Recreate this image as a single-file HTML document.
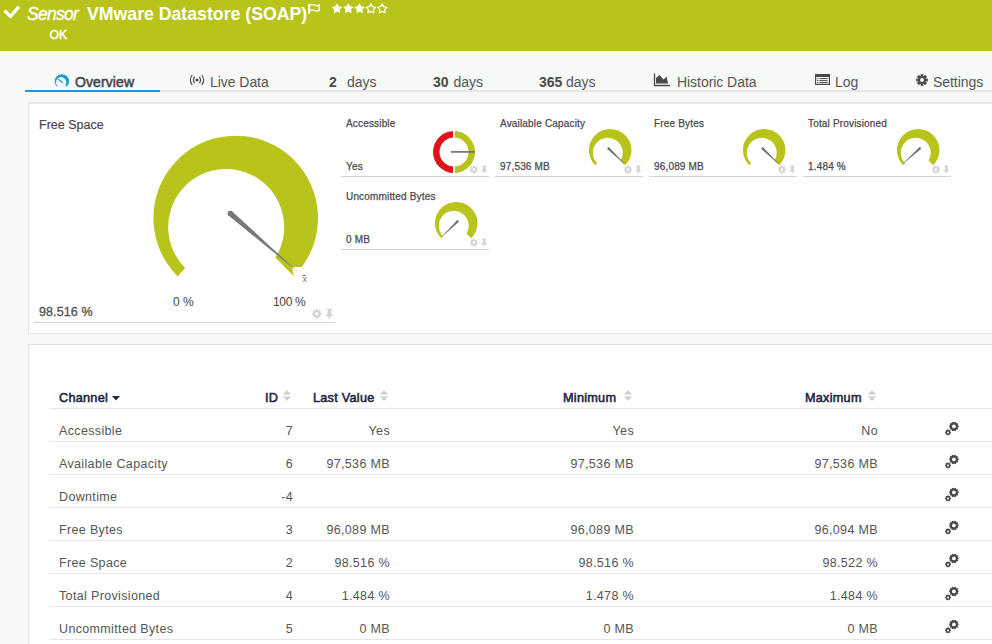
<!DOCTYPE html>
<html><head><meta charset="utf-8">
<style>
*{margin:0;padding:0;box-sizing:border-box}
html,body{width:992px;height:644px;overflow:hidden}
body{font-family:"Liberation Sans",sans-serif;background:#f7f8f8;position:relative;color:#555}
.a{position:absolute;white-space:nowrap;line-height:1}
#hdr{position:absolute;left:0;top:0;width:992px;height:51px;background:#b8c41c}
#tabline{position:absolute;left:25px;top:90px;width:967px;height:2px;background:#e6e6e6}
#tabsel{position:absolute;left:25px;top:90px;width:135px;height:2px;background:#1c9ad6}
.tab{position:absolute;top:75px;font-size:14px;letter-spacing:-0.05px;color:#555;line-height:1;white-space:nowrap}
.tab b{color:#4a4a4a}
.panel{position:absolute;left:28px;background:#fff;border:1px solid #e2e2e2;border-right:none}
#p1{border-top:2px solid #e6e7e7}
#p1{top:102px;width:970px;height:232px}
#p2{top:344px;width:970px;height:310px}
.wl{position:absolute;font-size:10px;color:#4a4a4a;line-height:1;white-space:nowrap;letter-spacing:0.17px;-webkit-text-stroke:0.25px #4a4a4a}
.sep{position:absolute;height:1px;background:#d2d2d2}
.th{position:absolute;top:392px;font-size:12.7px;color:#1d2540;line-height:1;white-space:nowrap;-webkit-text-stroke:0.55px #1d2540;letter-spacing:0.25px}
.rl{position:absolute;left:49px;width:943px;height:1px;background:#e6e6e6}
.td{position:absolute;font-size:12.5px;color:#555;line-height:1;white-space:nowrap;letter-spacing:0.35px}
.r{text-align:right}
svg{position:absolute;overflow:visible}
</style></head><body>
<div id="hdr"></div>
<svg style="left:0;top:0" width="30" height="30"><path d="M4.6 10.6 L10.5 16.5 L18.9 6.6" fill="none" stroke="#fff" stroke-width="3.2"/></svg>
<div class="a" style="left:27px;top:6px;font-size:17.5px;color:#fff;font-style:italic;letter-spacing:-0.7px;-webkit-text-stroke:0.35px #fff">Sensor</div>
<div class="a" style="left:87px;top:6px;font-size:17.7px;color:#fff;font-weight:bold">VMware Datastore (SOAP)</div>
<svg style="left:0;top:0" width="330" height="20"><path d="M309.2 4 V13.8" stroke="#fff" stroke-width="2"/><path d="M310 5 Q312.5 4 315 5.2 T319.2 5 V10.6 Q316.5 11.5 314.5 10.4 T310 10.6" fill="none" stroke="#fff" stroke-width="1.3"/></svg>
<svg style="left:0;top:0" width="400" height="20"><path d="M337.00 3.20 L338.70 6.35 L342.23 7.00 L339.76 9.60 L340.23 13.15 L337.00 11.60 L333.77 13.15 L334.24 9.60 L331.77 7.00 L335.30 6.35Z" fill="#fff"/><path d="M348.30 3.20 L350.00 6.35 L353.53 7.00 L351.06 9.60 L351.53 13.15 L348.30 11.60 L345.07 13.15 L345.54 9.60 L343.07 7.00 L346.60 6.35Z" fill="#fff"/><path d="M359.60 3.20 L361.30 6.35 L364.83 7.00 L362.36 9.60 L362.83 13.15 L359.60 11.60 L356.37 13.15 L356.84 9.60 L354.37 7.00 L357.90 6.35Z" fill="#fff"/><path d="M370.90 3.90 L372.43 6.70 L375.56 7.29 L373.37 9.60 L373.78 12.76 L370.90 11.40 L368.02 12.76 L368.43 9.60 L366.24 7.29 L369.37 6.70Z" fill="none" stroke="#fff" stroke-width="1.2" stroke-linejoin="round"/><path d="M382.20 3.90 L383.73 6.70 L386.86 7.29 L384.67 9.60 L385.08 12.76 L382.20 11.40 L379.32 12.76 L379.73 9.60 L377.54 7.29 L380.67 6.70Z" fill="none" stroke="#fff" stroke-width="1.2" stroke-linejoin="round"/></svg>
<div class="a" style="left:49.5px;top:29px;font-size:12.3px;color:#fff;-webkit-text-stroke:0.45px #fff">OK</div>

<div id="tabline"></div><div id="tabsel"></div>
<svg style="left:0;top:0" width="100" height="100"><g transform="translate(61.9,81.4) scale(0.072)"><use href="#gband" fill="#1c9ad6"/></g><path d="M58.3 79.3 L62.8 82.8" stroke="#1c9ad6" stroke-width="1.2"/></svg>
<div class="tab" style="left:75px;color:#484848;letter-spacing:0.1px;-webkit-text-stroke:0.55px #484848">Overview</div>
<svg style="left:0;top:0" width="250" height="100"><g fill="none" stroke="#4a4a4a" stroke-width="1.2"><path d="M192.2 75 Q188.6 80 192.2 85"/><path d="M194.6 76.8 Q192.3 80 194.6 83.2"/><path d="M201.8 75 Q205.4 80 201.8 85"/><path d="M199.4 76.8 Q201.7 80 199.4 83.2"/></g><circle cx="197" cy="80" r="1.6" fill="#4a4a4a"/></svg>
<div class="tab" style="left:210px">Live Data</div>
<div class="tab" style="left:329px"><b>2</b></div><div class="tab" style="left:347px">days</div>
<div class="tab" style="left:433px"><b>30</b></div><div class="tab" style="left:453.5px">days</div>
<div class="tab" style="left:539px"><b>365</b></div><div class="tab" style="left:566px">days</div>
<svg style="left:653px;top:73px" width="18" height="14"><path d="M1.5 0.5 V12.5 H17" fill="none" stroke="#4a4a4a" stroke-width="1.3"/><path d="M3 10.5 V5 L6.5 2 L10.5 6.5 L13.5 3.5 L15 10.5 Z" fill="#4a4a4a"/></svg>
<div class="tab" style="left:677px">Historic Data</div>
<svg style="left:0;top:0" width="900" height="100"><rect x="815.6" y="74.6" width="13.8" height="9.8" fill="none" stroke="#4a4a4a" stroke-width="1.2"/><rect x="815" y="74" width="15" height="3" fill="#4a4a4a"/><path d="M817.2 78.6 H818.4 M819.4 78.6 H827.6 M817.2 80.6 H818.4 M819.4 80.6 H827.6 M817.2 82.6 H818.4 M819.4 82.6 H827.6" stroke="#4a4a4a" stroke-width="1"/></svg>
<div class="tab" style="left:835px">Log</div>
<svg style="left:0;top:0" width="992" height="100"><path d="M920.73 76.10 L920.42 74.21 L923.58 74.21 L923.27 76.10 L923.86 76.35 L924.97 74.79 L927.21 77.03 L925.65 78.14 L925.90 78.73 L927.79 78.42 L927.79 81.58 L925.90 81.27 L925.65 81.86 L927.21 82.97 L924.97 85.21 L923.86 83.65 L923.27 83.90 L923.58 85.79 L920.42 85.79 L920.73 83.90 L920.14 83.65 L919.03 85.21 L916.79 82.97 L918.35 81.86 L918.10 81.27 L916.21 81.58 L916.21 78.42 L918.10 78.73 L918.35 78.14 L916.79 77.03 L919.03 74.79 L920.14 76.35Z M922 78.1 A1.9 1.9 0 1 0 922 81.9 A1.9 1.9 0 1 0 922 78.1Z" fill="#4a4a4a" fill-rule="evenodd"/></svg>
<div class="tab" style="left:933px">Settings</div>

<div class="panel" id="p1"></div>
<div class="panel" id="p2"></div>

<!-- big gauge -->
<div class="a" style="left:39px;top:119px;font-size:12.5px;color:#4a4a4a;-webkit-text-stroke:0.2px #4a4a4a">Free Space</div>
<svg style="left:0;top:0" width="992" height="644">
  <defs>
    <path id="gband" d="M-70.7 70.7 A100 100 0 1 1 70.7 70.7 L48.5 48.5 A70 70 0 1 0 -61.5 61 Z"/>
  </defs>
  <path d="M177.7 276.4 A82.3 82.3 0 1 1 301.8 267 L292 267 L293.7 276.1 L275.2 257.4 L278 253 A58 58 0 1 0 185.1 267.9 Z" fill="#b8c41c"/>
  <circle cx="230.4" cy="213.5" r="2.8" fill="#787878"/>
  <path d="M228.57 215.62 L232.23 211.38 L298.5 272.5 Z" fill="#787878"/>
</svg>
<div class="a" style="left:302.6px;top:275px;font-size:9px;color:#777">x</div><div class="a" style="left:302px;top:275px;width:4px;height:1px;background:#888"></div>
<div class="a" style="left:173px;top:296px;font-size:12px;color:#444">0 %</div>
<div class="a" style="left:273px;top:296px;font-size:12px;color:#444;letter-spacing:-0.35px">100 %</div>
<div class="a" style="left:39px;top:306px;font-size:12.5px;color:#505050;-webkit-text-stroke:0.3px #505050;letter-spacing:0.1px">98.516 %</div>
<div class="sep" style="left:34px;top:322px;width:301px"></div>
<svg style="left:0;top:0" width="992" height="644"><g transform="translate(311.8,308.8)"><use href="#gear"/></g><g transform="translate(325.3,308.8)"><use href="#pin"/></g></svg>

<svg style="left:0;top:0" width="0" height="0"><defs>
<g id="gear"><path d="M8.81 4.16 L9.93 4.19 L9.93 5.81 L8.81 5.84 L8.28 7.10 L9.06 7.92 L7.92 9.06 L7.10 8.28 L5.84 8.81 L5.81 9.93 L4.19 9.93 L4.16 8.81 L2.90 8.28 L2.08 9.06 L0.94 7.92 L1.72 7.10 L1.19 5.84 L0.07 5.81 L0.07 4.19 L1.19 4.16 L1.72 2.90 L0.94 2.08 L2.08 0.94 L2.90 1.72 L4.16 1.19 L4.19 0.07 L5.81 0.07 L5.84 1.19 L7.10 1.72 L7.92 0.94 L9.06 2.08 L8.28 2.90Z M5 3.4 A1.6 1.6 0 1 0 5 6.6 A1.6 1.6 0 1 0 5 3.4Z" fill="#d3d3d3" fill-rule="evenodd"/></g>
<g id="pin" fill="#d3d3d3"><path d="M1.2 0 H6.8 V1.3 H5.6 V4.8 L7.5 6.6 V7.4 H0.5 V6.6 L2.4 4.8 V1.3 H1.2 Z M3.4 7.4 H4.6 V10 H3.4 Z"/></g>
<g id="cog2"><path d="M12.79 3.47 L13.63 3.56 L13.63 5.24 L12.79 5.33 L12.60 5.93 L13.22 6.49 L12.23 7.86 L11.50 7.44 L10.99 7.81 L11.16 8.63 L9.56 9.15 L9.21 8.39 L8.59 8.39 L8.24 9.15 L6.64 8.63 L6.81 7.81 L6.30 7.44 L5.57 7.86 L4.58 6.49 L5.20 5.93 L5.01 5.33 L4.17 5.24 L4.17 3.56 L5.01 3.47 L5.20 2.87 L4.58 2.31 L5.57 0.94 L6.30 1.36 L6.81 0.99 L6.64 0.17 L8.24 -0.35 L8.59 0.41 L9.21 0.41 L9.56 -0.35 L11.16 0.17 L10.99 0.99 L11.50 1.36 L12.23 0.94 L13.22 2.31 L12.60 2.87Z M8.9 2.5000000000000004 A1.9 1.9 0 1 0 8.9 6.300000000000001 A1.9 1.9 0 1 0 8.9 2.5000000000000004Z M5.30 9.70 L5.93 9.74 L5.93 11.06 L5.30 11.10 L5.12 11.53 L5.53 12.00 L4.60 12.93 L4.13 12.52 L3.70 12.70 L3.66 13.33 L2.34 13.33 L2.30 12.70 L1.87 12.52 L1.40 12.93 L0.47 12.00 L0.88 11.53 L0.70 11.10 L0.07 11.06 L0.07 9.74 L0.70 9.70 L0.88 9.27 L0.47 8.80 L1.40 7.87 L1.87 8.28 L2.30 8.10 L2.34 7.47 L3.66 7.47 L3.70 8.10 L4.13 8.28 L4.60 7.87 L5.53 8.80 L5.12 9.27Z M3 9.4 A1.0 1.0 0 1 0 3 11.4 A1.0 1.0 0 1 0 3 9.4Z" fill="#474747" fill-rule="evenodd"/></g>
</defs></svg>
<div class="wl" style="left:346px;top:119px">Accessible</div>
<div class="wl" style="left:346px;top:162px">Yes</div>
<div class="sep" style="left:341px;top:176px;width:148px"></div>
<div class="wl" style="left:500px;top:119px">Available Capacity</div>
<div class="wl" style="left:500px;top:162px">97,536 MB</div>
<div class="sep" style="left:495px;top:176px;width:148px"></div>
<div class="wl" style="left:654px;top:119px">Free Bytes</div>
<div class="wl" style="left:654px;top:162px">96,089 MB</div>
<div class="sep" style="left:649px;top:176px;width:148px"></div>
<div class="wl" style="left:808px;top:119px">Total Provisioned</div>
<div class="wl" style="left:808px;top:162px">1.484 %</div>
<div class="sep" style="left:803px;top:176px;width:148px"></div>
<div class="wl" style="left:346px;top:192px">Uncommitted Bytes</div>
<div class="wl" style="left:346px;top:235px">0 MB</div>
<div class="sep" style="left:341px;top:249px;width:148px"></div>
<svg style="left:0;top:0" width="992" height="644">
<g transform="translate(469.8,165.5) scale(0.82)"><use href="#gear"/></g><g transform="translate(481.1,165.5) scale(0.82)"><use href="#pin"/></g>
<path d="M454 131 A21 21 0 0 0 454 173 L454 166.5 A14.5 14.5 0 0 1 454 137.5 Z" fill="#e0121a"/>
<path d="M454 131 A21 21 0 0 1 454 173 L454 166.5 A14.5 14.5 0 0 0 454 137.5 Z" fill="#b8c41c"/><rect x="453" y="129" width="2" height="46" fill="#fff"/>
<path d="M451 151.9 L475 151.9" stroke="#6a6a6a" stroke-width="1.6"/>
<g transform="translate(623.8,165.5) scale(0.82)"><use href="#gear"/></g><g transform="translate(635.1,165.5) scale(0.82)"><use href="#pin"/></g>
<g transform="translate(610.2,150.2) scale(0.213)"><use href="#gband" fill="#b8c41c"/></g>
<path d="M607.64 149.19 L623.63 163.48 L623.97 163.12 L609.16 147.61Z" fill="#6e6e6e"/><circle cx="608.4" cy="148.4" r="1.1" fill="#6e6e6e"/>
<g transform="translate(777.8,165.5) scale(0.82)"><use href="#gear"/></g><g transform="translate(789.1,165.5) scale(0.82)"><use href="#pin"/></g>
<g transform="translate(764.2,150.2) scale(0.213)"><use href="#gband" fill="#b8c41c"/></g>
<path d="M761.74 149.19 L777.73 163.48 L778.07 163.12 L763.26 147.61Z" fill="#6e6e6e"/><circle cx="762.5" cy="148.4" r="1.1" fill="#6e6e6e"/>
<g transform="translate(931.8,165.5) scale(0.82)"><use href="#gear"/></g><g transform="translate(943.1,165.5) scale(0.82)"><use href="#pin"/></g>
<g transform="translate(918.2,150.2) scale(0.213)"><use href="#gband" fill="#b8c41c"/></g>
<path d="M919.06 147.59 L903.83 162.72 L904.17 163.08 L920.54 149.21Z" fill="#6e6e6e"/><circle cx="919.8" cy="148.4" r="1.1" fill="#6e6e6e"/>
<g transform="translate(469.8,238.5) scale(0.82)"><use href="#gear"/></g><g transform="translate(481.1,238.5) scale(0.82)"><use href="#pin"/></g>
<g transform="translate(456.2,223.2) scale(0.213)"><use href="#gband" fill="#b8c41c"/></g>
<path d="M456.83 220.61 L442.53 235.72 L442.87 236.08 L458.37 222.19Z" fill="#6e6e6e"/><circle cx="457.6" cy="221.4" r="1.1" fill="#6e6e6e"/>
</svg>
<div class="th" style="left:59px">Channel</div>
<svg style="left:112px;top:396px" width="8" height="5"><path d="M0 0 H8 L4 4.5 Z" fill="#1d2540"/></svg>
<div class="th" style="left:265px">ID</div>
<div class="th" style="left:313px">Last Value</div>
<div class="th" style="left:563px">Minimum</div>
<div class="th" style="left:805px">Maximum</div>
<svg style="left:283px;top:390px" width="8" height="11"><path d="M0 4.5 L4 0 L8 4.5 Z M0 6.5 H8 L4 11 Z" fill="#cfcfcf"/></svg>
<svg style="left:380px;top:390px" width="8" height="11"><path d="M0 4.5 L4 0 L8 4.5 Z M0 6.5 H8 L4 11 Z" fill="#cfcfcf"/></svg>
<svg style="left:624px;top:390px" width="8" height="11"><path d="M0 4.5 L4 0 L8 4.5 Z M0 6.5 H8 L4 11 Z" fill="#cfcfcf"/></svg>
<svg style="left:868px;top:390px" width="8" height="11"><path d="M0 4.5 L4 0 L8 4.5 Z M0 6.5 H8 L4 11 Z" fill="#cfcfcf"/></svg>
<div class="rl" style="top:408px"></div>
<div class="td" style="left:59px;top:425px">Accessible</div>
<div class="td r" style="left:193px;width:100px;top:425px">7</div>
<div class="td r" style="left:240px;width:150px;top:425px">Yes</div>
<div class="td r" style="left:484px;width:150px;top:425px">Yes</div>
<div class="td r" style="left:728px;width:150px;top:425px">No</div>
<svg style="left:945px;top:422px" width="14" height="14"><use href="#cog2"/></svg>
<div class="rl" style="top:441px"></div>
<div class="td" style="left:59px;top:458px">Available Capacity</div>
<div class="td r" style="left:193px;width:100px;top:458px">6</div>
<div class="td r" style="left:240px;width:150px;top:458px">97,536 MB</div>
<div class="td r" style="left:484px;width:150px;top:458px">97,536 MB</div>
<div class="td r" style="left:728px;width:150px;top:458px">97,536 MB</div>
<svg style="left:945px;top:455px" width="14" height="14"><use href="#cog2"/></svg>
<div class="rl" style="top:474px"></div>
<div class="td" style="left:59px;top:491px">Downtime</div>
<div class="td r" style="left:193px;width:100px;top:491px">-4</div>
<svg style="left:945px;top:488px" width="14" height="14"><use href="#cog2"/></svg>
<div class="rl" style="top:507px"></div>
<div class="td" style="left:59px;top:524px">Free Bytes</div>
<div class="td r" style="left:193px;width:100px;top:524px">3</div>
<div class="td r" style="left:240px;width:150px;top:524px">96,089 MB</div>
<div class="td r" style="left:484px;width:150px;top:524px">96,089 MB</div>
<div class="td r" style="left:728px;width:150px;top:524px">96,094 MB</div>
<svg style="left:945px;top:521px" width="14" height="14"><use href="#cog2"/></svg>
<div class="rl" style="top:540px"></div>
<div class="td" style="left:59px;top:557px">Free Space</div>
<div class="td r" style="left:193px;width:100px;top:557px">2</div>
<div class="td r" style="left:240px;width:150px;top:557px">98.516 %</div>
<div class="td r" style="left:484px;width:150px;top:557px">98.516 %</div>
<div class="td r" style="left:728px;width:150px;top:557px">98.522 %</div>
<svg style="left:945px;top:554px" width="14" height="14"><use href="#cog2"/></svg>
<div class="rl" style="top:573px"></div>
<div class="td" style="left:59px;top:590px">Total Provisioned</div>
<div class="td r" style="left:193px;width:100px;top:590px">4</div>
<div class="td r" style="left:240px;width:150px;top:590px">1.484 %</div>
<div class="td r" style="left:484px;width:150px;top:590px">1.478 %</div>
<div class="td r" style="left:728px;width:150px;top:590px">1.484 %</div>
<svg style="left:945px;top:587px" width="14" height="14"><use href="#cog2"/></svg>
<div class="rl" style="top:606px"></div>
<div class="td" style="left:59px;top:623px">Uncommitted Bytes</div>
<div class="td r" style="left:193px;width:100px;top:623px">5</div>
<div class="td r" style="left:240px;width:150px;top:623px">0 MB</div>
<div class="td r" style="left:484px;width:150px;top:623px">0 MB</div>
<div class="td r" style="left:728px;width:150px;top:623px">0 MB</div>
<svg style="left:945px;top:620px" width="14" height="14"><use href="#cog2"/></svg>
<div class="rl" style="top:639px"></div>
</body></html>
